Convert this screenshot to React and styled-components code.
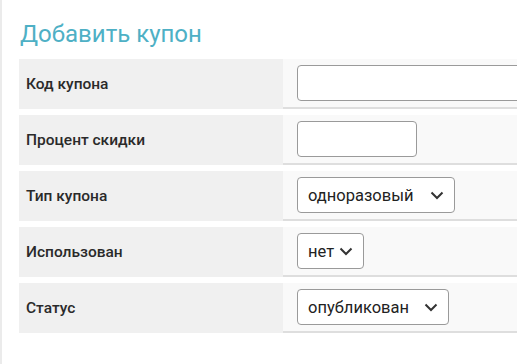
import React from "react";
import styled, { createGlobalStyle } from "styled-components";

const Global = createGlobalStyle`
    html, body {
        margin: 0;
        padding: 0;
        background: #fff;
        font-family: Roboto, "Liberation Sans", sans-serif;
    }
`

const Page = styled.div`
    width: 517px;
    height: 364px;
    box-sizing: border-box;
    border-left: 2px solid #ebebeb;
    padding: 20px 0 0 17px;
    overflow: hidden;
`

const Title = styled.h2`
    margin: 0 0 11px 1px;
    font-size: 24px;
    font-weight: 400;
    line-height: 28px;
    color: #4eb0c5;
`

const Form = styled.div`
    display: grid;
    grid-template-columns: 264px 300px;
    row-gap: 6px;
`

const Label = styled.div`
    display: flex;
    align-items: center;
    height: 50px;
    padding-left: 7px;
    background: #f0f0f0;
    font-size: 15.5px;
    font-weight: 500;
    color: #2a2a2a;
`

const Value = styled.div`
    display: flex;
    align-items: flex-start;
    height: 50px;
    box-sizing: border-box;
    padding: 6px 14px 0;
    background: #f9f9f9;
    border-bottom: 2px solid #dedede;
`

const Input = styled.input`
    box-sizing: border-box;
    width: ${p => p.$width}px;
    height: 36px;
    border: 1px solid #9a9a9a;
    border-radius: 4px;
    background: #fff;
    flex-shrink: 0;
`

const Select = styled.div`
    display: flex;
    align-items: center;
    gap: ${p => p.$gap}px;
    box-sizing: border-box;
    height: 36px;
    padding: 0 10px 0 10px;
    border: 1px solid #9a9a9a;
    border-radius: 4px;
    background: #fff;
    font-size: 16.5px;
    color: #222;
`

function Chevron() {
    return (
        <svg width="14" height="9" viewBox="0 0 14 9">
            <path d="M1.5 1.5 L7 7 L12.5 1.5" fill="none" stroke="#333" strokeWidth="2" />
        </svg>
    )
}

const rows = [
    { label: "Код купона", input: 300 },
    { label: "Процент скидки", input: 120 },
    { label: "Тип купона", select: "одноразовый", gap: 16 },
    { label: "Использован", select: "нет", gap: 5 },
    { label: "Статус", select: "опубликован", gap: 15 },
]

function App() {
    return (
        <Page>
            <Global />
            <Title>Добавить купон</Title>
            <Form>
                {rows.map(row => (
                    <React.Fragment key={row.label}>
                        <Label>{row.label}</Label>
                        <Value>
                            {row.input && <Input $width={row.input} />}
                            {row.select && (
                                <Select $gap={row.gap}>
                                    {row.select}
                                    <Chevron />
                                </Select>
                            )}
                        </Value>
                    </React.Fragment>
                ))}
            </Form>
        </Page>
    )
}

export default App;
